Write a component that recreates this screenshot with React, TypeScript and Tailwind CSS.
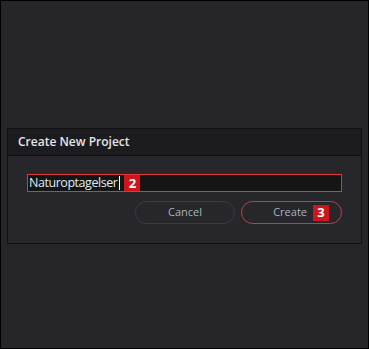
import React from 'react';

export default function App() {
  return (
    <div
      className="w-[369px] h-[349px] bg-[#25252a] border border-black pt-[127px] px-[6px]"
      style={{ fontFamily: '"Open Sans", "Liberation Sans", sans-serif' }}
    >
      {/* Dialog */}
      <div className="w-[355px] h-[116px] border border-[#111114] bg-[#26262b] flex flex-col">
        <div className="h-[27px] bg-[#1c1c20] border-b border-[#0e0e10] flex items-center px-[10px]">
          <span className="text-[12px] font-semibold text-[#e4e4e8]">Create New Project</span>
        </div>

        <div className="flex flex-col items-end px-[19px] pt-[18px]">
          {/* Name field */}
          <div className="w-full h-[18px] border border-[#e0353a] bg-[#151515] flex items-center pl-[1px]">
            <span className="text-[12.5px] leading-none text-[#dfe9f2] tracking-[-0.45px]">Naturoptagelser</span>
            <span className="w-px h-[14px] bg-white ml-[2px]" />
            <span className="ml-[4px] w-[16px] h-[16px] bg-[#d0141e] text-white text-[13px] font-bold leading-none flex items-center justify-center">
              2
            </span>
          </div>

          {/* Buttons */}
          <div className="flex gap-[6px] mt-[9px]">
            <button className="w-[100px] h-[23px] rounded-full border border-[#3b3c42] text-[11px] text-[#a9b4bd] flex items-center justify-center">
              Cancel
            </button>
            <button className="w-[101px] h-[23px] rounded-full border border-[#d8343a] text-[11px] text-[#a9b4bd] flex items-center justify-end pr-[12px]">
              Create
              <span className="ml-[6px] w-[16px] h-[16px] bg-[#d0141e] text-white text-[13px] font-bold leading-none flex items-center justify-center">
                3
              </span>
            </button>
          </div>
        </div>
      </div>
    </div>
  );
}
